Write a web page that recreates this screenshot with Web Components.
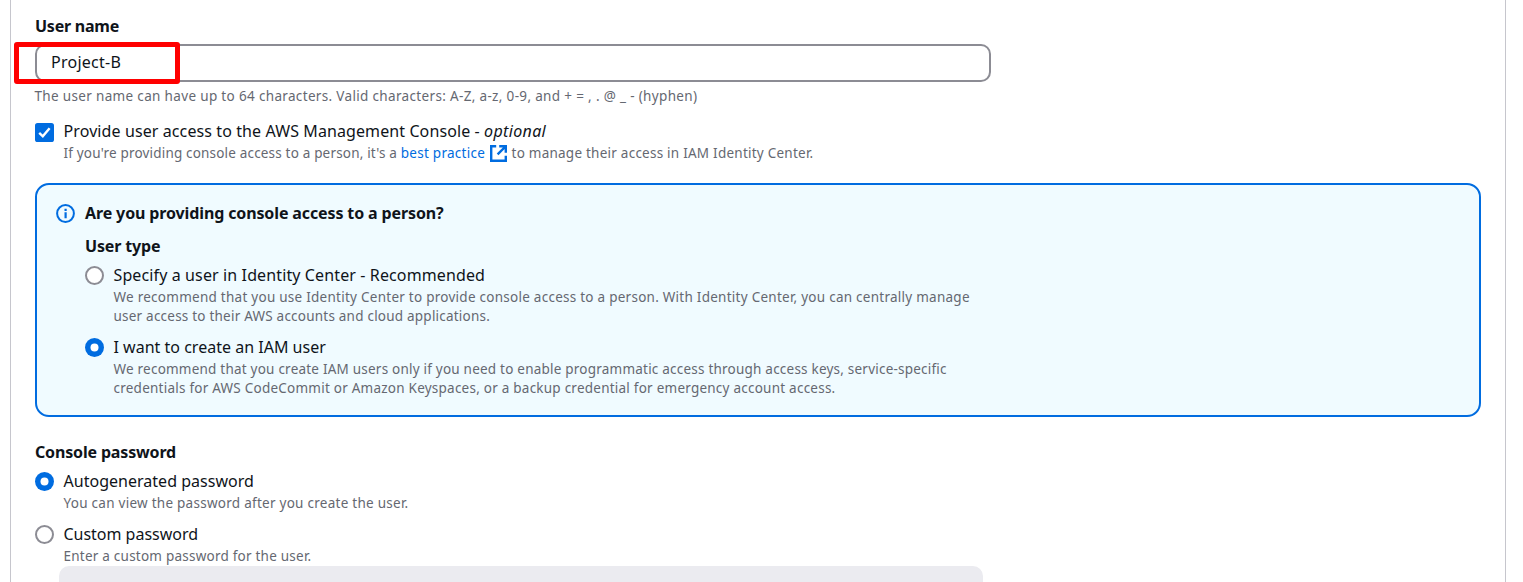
<!DOCTYPE html>
<html lang="en"><head><meta charset="utf-8"><title>Specify user details</title>
<style>
html,body{margin:0;height:582px;overflow:hidden;background:#fff}
body{font-family:"Noto Sans","Open Sans",sans-serif;color:#0f141a}
</style></head><body>
<user-details-form></user-details-form>
<script>
const define=(name,html)=>customElements.define(name,class extends HTMLElement{
  constructor(){super();this.attachShadow({mode:'open'}).innerHTML=html;}
});
define('form-heading',`<style>:host{display:block;font-size:16px;line-height:24px;font-weight:700;white-space:nowrap;letter-spacing:var(--track,-.16px)}</style><slot></slot>`);
define('text-line',`<style>:host{display:block;font-size:13.5px;line-height:19px;color:#656871;white-space:nowrap;letter-spacing:var(--track,.22px)}:host([label]){font-size:16px;line-height:24px;color:#0f141a;letter-spacing:var(--track,0px)}</style><slot></slot>`);
define('text-input',`<style>:host{display:flex;position:relative;box-sizing:border-box;width:956px;height:38px;border:2px solid #8c8c94;border-radius:10px;padding:0 14px 2px;align-items:center;background:#fff}
.mark{position:absolute;left:-23px;top:-4px;width:156px;height:32px;border:5px solid #f00;border-radius:3px}</style><slot></slot><div class="mark"></div>`);
define('choice-item',`<style>:host{display:grid;grid-template-columns:19px 1fr;column-gap:9.5px}
::slotted([label]){margin-bottom:1px}
svg{display:block;width:19px;height:19px;margin-top:3px}.check,.on,.off{display:none}
:host([kind=check]) .check,:host([kind=on]) .on,:host([kind=off]) .off{display:block}:host([kind=check]) svg{margin-top:4px}</style>
<svg viewBox="0 0 19 19"><g class="check"><rect width="19" height="19" rx="2.6" fill="#006ce0"/><path d="M4.2 9.9 7.8 13.3 14.6 5.3" fill="none" stroke="#fff" stroke-width="2.4"/></g>
<g class="on"><circle cx="9.5" cy="9.5" r="9.5" fill="#006ce0"/><circle cx="9.5" cy="9.5" r="4" fill="#fff"/></g>
<circle class="off" cx="9.5" cy="9.5" r="8.5" fill="#fff" stroke="#8c8c94" stroke-width="2"/></svg><div><slot></slot></div>`);
define('external-link',`<style>:host{display:inline-flex;align-items:center;color:#006ce0;height:19px;vertical-align:top;letter-spacing:.26px}svg{width:17px;height:17px;margin:0 4.5px 0 5px}</style><slot></slot>
<svg viewBox="0 0 17 17" fill="none" stroke="currentColor" stroke-width="2.4"><path d="M6.2 1.2H1.2V15.8H15.8V10.8M9.2 1.2H15.8V7.8M15.5 1.5 7.6 9.4"/></svg>`);
define('info-alert',`<style>:host{display:grid;box-sizing:border-box;grid-template-columns:19px 1fr;column-gap:10px;width:1446px;height:234px;border:2px solid #006ce0;border-radius:14px;background:#f0fbff;padding:16px 19px}svg{width:19px;height:19px;margin-top:3px}</style>
<svg viewBox="0 0 19 19"><circle cx="9.5" cy="9.5" r="8.4" fill="none" stroke="#006ce0" stroke-width="2"/><path d="M8.5 4.8h2.2v2.1H8.5zM8.5 8.2h2.2v6H8.5z" fill="#006ce0"/></svg><div><slot></slot></div>`);
define('user-details-form',`<style>:host{display:block;box-sizing:border-box;margin-left:10px;width:1496px;height:582px;border:1px solid #c6c6cd;border-width:0 1px;padding:14px 24px 0;overflow:hidden}
i{letter-spacing:.35px}.after{letter-spacing:.24px}text-input{margin-top:6px}.hint{margin:5px 0 0 -.5px}.access{margin-top:13px}info-alert{margin-top:20px}.type{margin-top:9px}.first{margin-top:5px}.next{margin-top:9px}.console{margin-top:23px}.box{margin:0 0 0 24px;width:924px;height:40px;border-radius:10px;background:#ebebf0}</style>
<form-heading style="--track:-.23px">User name</form-heading>
<text-input><text-line label style="--track:.25px">Project-B</text-line></text-input>
<text-line class="hint" style="--track:.337px">The user name can have up to 64 characters. Valid characters: A-Z, a-z, 0-9, and + = , . @ _ - (hyphen)</text-line>
<choice-item class="access" kind="check"><text-line label style="--track:.1px">Provide user access to the AWS Management Console - <i>optional</i></text-line><text-line style="--track:.18px">If you're providing console access to a person, it's a <external-link>best practice</external-link><span class="after">to manage their access in IAM Identity Center.</span></text-line></choice-item>
<info-alert><form-heading style="--track:-.125px">Are you providing console access to a person?</form-heading><form-heading class="type">User type</form-heading>
<choice-item class="first" kind="off"><text-line label style="--track:.12px">Specify a user in Identity Center - Recommended</text-line><text-line style="--track:.258px">We recommend that you use Identity Center to provide console access to a person. With Identity Center, you can centrally manage</text-line><text-line>user access to their AWS accounts and cloud applications.</text-line></choice-item>
<choice-item class="next" kind="on"><text-line label style="--track:.01px">I want to create an IAM user</text-line><text-line>We recommend that you create IAM users only if you need to enable programmatic access through access keys, service-specific</text-line><text-line style="--track:.236px">credentials for AWS CodeCommit or Amazon Keyspaces, or a backup credential for emergency account access.</text-line></choice-item></info-alert>
<form-heading class="console">Console password</form-heading>
<choice-item class="first" kind="on"><text-line label style="--track:.02px">Autogenerated password</text-line><text-line style="--track:.265px">You can view the password after you create the user.</text-line></choice-item>
<choice-item class="next" kind="off"><text-line label style="--track:-.02px">Custom password</text-line><text-line style="--track:.23px">Enter a custom password for the user.</text-line></choice-item>
<div class="box"></div>`);
</script></body></html>
